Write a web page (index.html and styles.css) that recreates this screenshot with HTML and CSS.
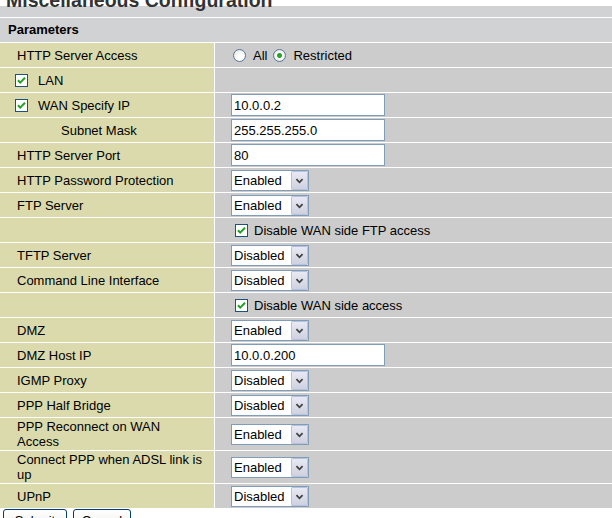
FILE: index.html
```html
<!DOCTYPE html>
<html lang="en">
<head>
    <meta charset="UTF-8">
    <meta name="viewport" content="width=device-width, initial-scale=1.0">
    <title>Miscellaneous Configuration</title>
    <link rel="stylesheet" href="styles.css">
</head>
<body>

    <div class="title">Miscellaneous Configuration</div>

    <div class="form">
        <div class="head">Parameters</div>

        <div class="label">HTTP Server Access</div>
        <div class="value">
            <input type="radio" name="access" class="radio first"><span>All</span>
            <input type="radio" name="access" class="radio" checked><span>Restricted</span>
        </div>

        <div class="label check">
            <svg class="cb" width="13" height="13" viewBox="0 0 13 13"><rect x="0.5" y="0.5" width="12" height="12" fill="#fff" stroke="#1c5180"/><path d="M3 6.2 L5.2 8.6 L10 3.8" fill="none" stroke="#21a121" stroke-width="2"/></svg>
            <span>LAN</span>
        </div>
        <div class="value"></div>

        <div class="label check">
            <svg class="cb" width="13" height="13" viewBox="0 0 13 13"><rect x="0.5" y="0.5" width="12" height="12" fill="#fff" stroke="#1c5180"/><path d="M3 6.2 L5.2 8.6 L10 3.8" fill="none" stroke="#21a121" stroke-width="2"/></svg>
            <span>WAN Specify IP</span>
        </div>
        <div class="value"><input type="text" class="text" value="10.0.0.2"></div>

        <div class="label sub">Subnet Mask</div>
        <div class="value"><input type="text" class="text" value="255.255.255.0"></div>

        <div class="label">HTTP Server Port</div>
        <div class="value"><input type="text" class="text" value="80"></div>

        <div class="label">HTTP Password Protection</div>
        <div class="value">
            <span class="sel"><select><option selected>Enabled</option><option>Disabled</option></select><svg class="arrow" width="17" height="19" viewBox="0 0 17 19"><path d="M5 8 L8.5 11.5 L12 8" fill="none" stroke="#404040" stroke-width="2"/></svg></span>
        </div>

        <div class="label">FTP Server</div>
        <div class="value">
            <span class="sel"><select><option selected>Enabled</option><option>Disabled</option></select><svg class="arrow" width="17" height="19" viewBox="0 0 17 19"><path d="M5 8 L8.5 11.5 L12 8" fill="none" stroke="#404040" stroke-width="2"/></svg></span>
        </div>

        <div class="label"></div>
        <div class="value check">
            <svg class="cb" width="13" height="13" viewBox="0 0 13 13"><rect x="0.5" y="0.5" width="12" height="12" fill="#fff" stroke="#1c5180"/><path d="M3 6.2 L5.2 8.6 L10 3.8" fill="none" stroke="#21a121" stroke-width="2"/></svg>
            <span>Disable WAN side FTP access</span>
        </div>

        <div class="label">TFTP Server</div>
        <div class="value">
            <span class="sel"><select><option>Enabled</option><option selected>Disabled</option></select><svg class="arrow" width="17" height="19" viewBox="0 0 17 19"><path d="M5 8 L8.5 11.5 L12 8" fill="none" stroke="#404040" stroke-width="2"/></svg></span>
        </div>

        <div class="label">Command Line Interface</div>
        <div class="value">
            <span class="sel"><select><option>Enabled</option><option selected>Disabled</option></select><svg class="arrow" width="17" height="19" viewBox="0 0 17 19"><path d="M5 8 L8.5 11.5 L12 8" fill="none" stroke="#404040" stroke-width="2"/></svg></span>
        </div>

        <div class="label"></div>
        <div class="value check">
            <svg class="cb" width="13" height="13" viewBox="0 0 13 13"><rect x="0.5" y="0.5" width="12" height="12" fill="#fff" stroke="#1c5180"/><path d="M3 6.2 L5.2 8.6 L10 3.8" fill="none" stroke="#21a121" stroke-width="2"/></svg>
            <span>Disable WAN side access</span>
        </div>

        <div class="label">DMZ</div>
        <div class="value">
            <span class="sel"><select><option selected>Enabled</option><option>Disabled</option></select><svg class="arrow" width="17" height="19" viewBox="0 0 17 19"><path d="M5 8 L8.5 11.5 L12 8" fill="none" stroke="#404040" stroke-width="2"/></svg></span>
        </div>

        <div class="label">DMZ Host IP</div>
        <div class="value"><input type="text" class="text" value="10.0.0.200"></div>

        <div class="label">IGMP Proxy</div>
        <div class="value">
            <span class="sel"><select><option>Enabled</option><option selected>Disabled</option></select><svg class="arrow" width="17" height="19" viewBox="0 0 17 19"><path d="M5 8 L8.5 11.5 L12 8" fill="none" stroke="#404040" stroke-width="2"/></svg></span>
        </div>

        <div class="label">PPP Half Bridge</div>
        <div class="value">
            <span class="sel"><select><option>Enabled</option><option selected>Disabled</option></select><svg class="arrow" width="17" height="19" viewBox="0 0 17 19"><path d="M5 8 L8.5 11.5 L12 8" fill="none" stroke="#404040" stroke-width="2"/></svg></span>
        </div>

        <div class="label">PPP Reconnect on WAN<br>Access</div>
        <div class="value">
            <span class="sel"><select><option selected>Enabled</option><option>Disabled</option></select><svg class="arrow" width="17" height="19" viewBox="0 0 17 19"><path d="M5 8 L8.5 11.5 L12 8" fill="none" stroke="#404040" stroke-width="2"/></svg></span>
        </div>

        <div class="label">Connect PPP when ADSL link is<br>up</div>
        <div class="value">
            <span class="sel"><select><option selected>Enabled</option><option>Disabled</option></select><svg class="arrow" width="17" height="19" viewBox="0 0 17 19"><path d="M5 8 L8.5 11.5 L12 8" fill="none" stroke="#404040" stroke-width="2"/></svg></span>
        </div>

        <div class="label">UPnP</div>
        <div class="value">
            <span class="sel"><select><option>Enabled</option><option selected>Disabled</option></select><svg class="arrow" width="17" height="19" viewBox="0 0 17 19"><path d="M5 8 L8.5 11.5 L12 8" fill="none" stroke="#404040" stroke-width="2"/></svg></span>
        </div>
    </div>

    <div class="buttons">
        <button class="btn submit">Submit</button>
        <button class="btn cancel">Cancel</button>
    </div>

</body>
</html>
```

FILE: styles.css
```css
body {
    margin: 0;
    background: #fff;
    font-family: "Liberation Sans", Arial, sans-serif;
    font-size: 13px;
    color: #000;
    overflow: hidden;
}
.title {
    height: 17px;
    padding-left: 6px;
    box-sizing: border-box;
    background: linear-gradient(#fff 6px, #d1d2d4 6px);
    color: #333;
    font-size: 19.5px;
    font-weight: bold;
    line-height: 0;
    white-space: nowrap;
}
.form {
    display: grid;
    grid-template-columns: 214px 1fr;
    gap: 1px;
    padding: 1px 0;
    background: #fff;
}
.head {
    grid-column: 1 / -1;
    height: 24px;
    padding-left: 8px;
    background: #d1d2d4;
    font-weight: bold;
    line-height: 24px;
}
.label, .value {
    display: flex;
    align-items: center;
    min-height: 24px;
    padding: 1px 0;
    box-sizing: border-box;
    line-height: 15px;
}
.label {
    padding-left: 17px;
    background: #dadaad;
}
.label.check {
    padding-left: 15px;
}
.label.check .cb {
    margin-right: 10px;
}
.label.sub {
    padding-left: 61px;
}
.value {
    padding-left: 16px;
    background: #ccc;
}
.value.check .cb {
    margin-left: 4px;
    margin-right: 6px;
}
.cb {
    flex: none;
}
.radio {
    appearance: none;
    flex: none;
    width: 13px;
    height: 13px;
    margin: 0 7px 0 6px;
    border: 1px solid #5a7898;
    border-radius: 50%;
    box-sizing: border-box;
    background: radial-gradient(circle at 60% 65%, #fff 30%, #dcdcd7 100%);
}
.radio.first {
    margin-left: 2px;
}
.radio:checked {
    background: radial-gradient(circle, #2fa82f 0, #21a121 2px, #fff 3px, #f4f4f0 50%, #d8d8d2 100%);
}
.text {
    width: 154px;
    height: 22px;
    margin: 0;
    padding: 0 2px;
    box-sizing: border-box;
    border: 1px solid #7f9db9;
    font-family: "Liberation Sans", Arial, sans-serif;
    font-size: 13px;
    color: #000;
    outline: none;
}
.sel {
    position: relative;
    display: inline-block;
    height: 21px;
}
.sel select {
    appearance: none;
    width: 78px;
    height: 21px;
    margin: 0;
    padding: 0 0 0 2px;
    border: 1px solid #7f9db9;
    border-radius: 0;
    background: #fff;
    font-family: "Liberation Sans", Arial, sans-serif;
    font-size: 13px;
    color: #000;
    outline: none;
}
.sel .arrow {
    position: absolute;
    top: 1px;
    right: 1px;
    box-sizing: border-box;
    border: 1px solid #b8c2da;
    border-radius: 1px;
    background: linear-gradient(#e8e9f3, #cfd1df);
    pointer-events: none;
}
.buttons {
    display: flex;
    gap: 6px;
    padding: 0 3px;
}
.btn {
    height: 23px;
    padding: 0;
    border: 1px solid #003c74;
    border-radius: 3px;
    background: linear-gradient(#fff, #ecebe6);
    font-family: "Liberation Sans", Arial, sans-serif;
    font-size: 13px;
    color: #000;
}
.submit {
    width: 64px;
}
.cancel {
    width: 58px;
}
```
